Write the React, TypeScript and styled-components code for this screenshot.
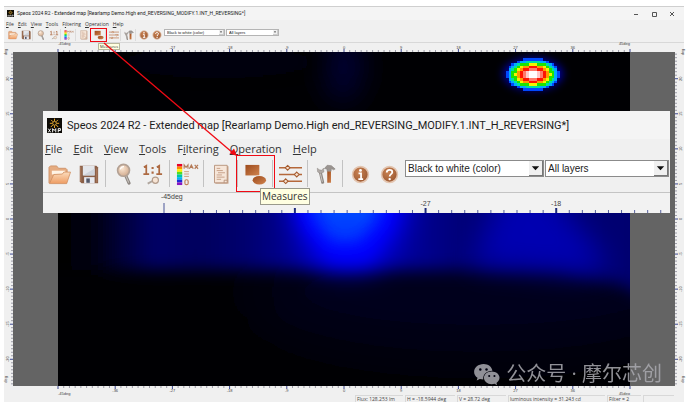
import React from "react";
import styled, { createGlobalStyle, css } from "styled-components";

const GlobalStyle = createGlobalStyle`
  *, *::before, *::after { box-sizing: border-box; }
  body { margin: 0; background: #fff; font-family: "Open Sans", "Noto Sans", sans-serif; color: #222; }
  svg { display: block; }
`;

/* ---------- window shell ---------- */

const Page = styled.div`
  height: 100vh;
  padding: 6px 6px 7px 4px;
`;
const Window = styled.main`
  position: relative;
  display: flex;
  flex-direction: column;
  height: 100%;
  background: #f0f0f0;
  border-top: 1px solid #cfcfcf;
`;

/* Both the window and the enlarged callout share these parts; $big picks the enlarged set. */
type Sized = { $big?: boolean };

const TitleBar = styled.header<Sized>`
  display: flex;
  align-items: center;
  gap: ${(p) => (p.$big ? 5 : 3)}px;
  height: ${(p) => (p.$big ? 28 : 13)}px;
  padding: 0 ${(p) => (p.$big ? 4 : 3)}px;
  background: #f4f4f4;
`;
const Title = styled.h1<Sized>`
  flex: 1;
  margin: 0;
  font-family: Roboto, "Open Sans", sans-serif;
  font-size: ${(p) => (p.$big ? 11 : 5)}px;
  line-height: 1;
  font-weight: 400;
  white-space: nowrap;
  color: #1c1c1c;
`;
const Controls = styled.div`
  display: flex;
`;
const ControlButton = styled.button`
  display: grid;
  place-items: center;
  width: 18px;
  height: 12px;
  padding: 0;
  border: 0;
  background: none;
`;
const MenuBar = styled.nav<Sized>`
  display: flex;
  align-items: center;
  gap: ${(p) => (p.$big ? 11 : 4)}px;
  height: ${(p) => (p.$big ? 18 : 8)}px;
  padding: 0 2px;
`;
const MenuButton = styled.button<Sized>`
  padding: 0;
  border: 0;
  background: none;
  font: inherit;
  font-size: ${(p) => (p.$big ? 11 : 5)}px;
  line-height: 1;
  color: #333;
`;
const Toolbar = styled.div<Sized>`
  display: flex;
  align-items: flex-start;
  height: ${(p) => (p.$big ? 36 : 15)}px;
  padding: ${(p) => (p.$big ? "3px 0 0 2px" : "1px 0 0 2px")};
  border-bottom: 1px solid ${(p) => (p.$big ? "#c4c4c4" : "#d8d8d8")};
`;
const ToolButton = styled.button<Sized & { $narrow?: boolean; $marked?: boolean }>`
  position: relative;
  display: grid;
  place-items: center;
  flex: none;
  width: ${(p) => (p.$big ? (p.$narrow ? 28 : 29) : 13)}px;
  height: ${(p) => (p.$big ? 28 : 12)}px;
  padding: 0;
  border: 0;
  background: none;
  font-family: inherit;
  ${(p) =>
    p.$marked &&
    css`
      z-index: 1;
      &::after {
        content: "";
        position: absolute;
        inset: ${p.$big ? "-5px -5px -4px -5px" : "-1px -2px"};
        border: 1px solid #f00a14;
      }
    `}
`;
const Divider = styled.span<Sized>`
  flex: none;
  width: 1px;
  height: ${(p) => (p.$big ? 27 : 12)}px;
  margin: 0 ${(p) => (p.$big ? "3px 0 2px" : "1px 0 0")};
  background: ${(p) => (p.$big ? "#c2c2c2" : "#dcdcdc")};
`;
const Tip = styled.span<Sized>`
  position: absolute;
  z-index: 2;
  top: ${(p) => (p.$big ? 28 : 14)}px;
  left: ${(p) => (p.$big ? 19 : 6)}px;
  padding: ${(p) => (p.$big ? "2px 1px" : "0 1px")};
  border: 1px solid ${(p) => (p.$big ? "#9a9a8c" : "#b8b89c")};
  background: #ffffe1;
  font-size: ${(p) => (p.$big ? 10 : 4)}px;
  line-height: ${(p) => (p.$big ? 11 : 5)}px;
  color: #333;
`;

const SelectBox = styled.label<Sized & { $wide?: boolean }>`
  position: relative;
  flex: none;
  width: ${(p) => (p.$big ? (p.$wide ? 139 : 124) : p.$wide ? 61 : 53)}px;
  height: ${(p) => (p.$big ? 17 : 7)}px;
  margin-left: 1px;
  & > svg {
    position: absolute;
    right: 1px;
    top: 1px;
    width: ${(p) => (p.$big ? 14 : 5)}px;
    height: calc(100% - 2px);
    background: #f0f0f0;
    border-right: 1px solid ${(p) => (p.$big ? "#777" : "#ccc")};
    border-bottom: 1px solid ${(p) => (p.$big ? "#777" : "#ccc")};
    pointer-events: none;
  }
`;
const SelectInput = styled.select<Sized>`
  appearance: none;
  display: block;
  width: 100%;
  height: 100%;
  padding: 0 2px;
  border: 1px solid ${(p) => (p.$big ? "#8b8b8b" : "#b4b4b4")};
  border-radius: 0;
  background: #fff;
  font-family: "Liberation Sans", Arial, sans-serif;
  font-size: ${(p) => (p.$big ? 10 : 4)}px;
  line-height: 1;
  color: #222;
`;

/* ---------- map area ---------- */

const Viewer = styled.section`
  flex: 1;
  min-height: 0;
  display: grid;
  grid-template-columns: 9px 45px minmax(0, 1fr) 45px 9px;
  grid-template-rows: 9px minmax(0, 1fr) 9px;
`;
const Margin = styled.div`
  background: #646464;
  grid-row: 2;
`;
const RulerSlot = styled.div<{ $col: number; $row: number }>`
  grid-column: ${(p) => p.$col};
  grid-row: ${(p) => p.$row};
  min-width: 0;
`;
const RulerSvg = styled.svg`
  width: 100%;
  height: 100%;
  overflow: visible;
  font-family: "Liberation Sans", Arial, sans-serif;
  font-size: 4px;
  fill: #444;
`;
const MapSlot = styled.div`
  grid-column: 3;
  grid-row: 2;
  background: #000;
  & > svg {
    width: 100%;
    height: 100%;
  }
`;

const StatusBar = styled.footer`
  display: grid;
  grid-template-columns: 1fr 50px 52px 51px 99px 36px 33px 8px;
  height: 7px;
  font-size: 5px;
  line-height: 6px;
  color: #444;
  white-space: nowrap;
`;
const StatusCell = styled.span`
  padding-left: 1px;
  margin-right: 2px;
  border-top: 1px solid #d8d8d8;
  border-left: 1px solid #d8d8d8;
`;

/* ---------- overlays ---------- */

const Callout = styled.section`
  position: absolute;
  top: 104px;
  left: 39px;
  right: 14px;
  background: #f0f0f0;
`;
const CalloutRuler = styled.div`
  height: 20px;
  background: #f2f2f2;
  & > svg {
    font-size: 7px;
  }
`;
const Arrow = styled.svg`
  position: absolute;
  z-index: 3;
  top: 35px;
  left: 99px;
  pointer-events: none;
`;
const Watermark = styled.div`
  position: absolute;
  right: 22px;
  bottom: 15px;
  display: flex;
  align-items: center;
  gap: 6px;
  font-family: "Open Sans", "Noto Sans CJK SC", sans-serif;
  font-size: 20px;
  line-height: 26px;
  color: #aaaab0;
  opacity: 0.85;
`;

/* ---------- icons, all on a 24-unit grid ---------- */

const Svg = ({ size, children }: { size: number; children: React.ReactNode }) => (
  <svg width={size} height={size} viewBox="0 0 24 24" fill="none" aria-hidden="true">
    {children}
  </svg>
);

const HiddenDefs = styled.svg`
  position: absolute;
`;

const SharedDefs = () => (
  <HiddenDefs width="0" height="0" aria-hidden="true">
    <defs>
      <linearGradient id="copper" x1="0" y1="0" x2="1" y2="1">
        <stop offset="0" stopColor="#9c4a1c" />
        <stop offset="1" stopColor="#d0834e" />
      </linearGradient>
      <linearGradient id="folderFront" x1="0" y1="0" x2="0" y2="1">
        <stop offset="0" stopColor="#fbdcbc" />
        <stop offset="1" stopColor="#ee9c63" />
      </linearGradient>
      <radialGradient id="glass" cx="0.4" cy="0.35" r="0.7">
        <stop offset="0" stopColor="#fbe6d2" />
        <stop offset="1" stopColor="#cfa88b" />
      </radialGradient>
      <radialGradient id="badge" cx="0.4" cy="0.35" r="0.7">
        <stop offset="0" stopColor="#c98252" />
        <stop offset="1" stopColor="#9a5730" />
      </radialGradient>
    </defs>
  </HiddenDefs>
);

const glyphs: Record<string, React.ReactNode> = {
  Open: (
    <>
      <path d="M1 21V4.500L2.500 3H9l2 2.500h7.500L20 7v4" fill="#e5ab80" stroke="#c98a5e" strokeWidth=".8" />
      <path d="M4 8h14v4H4z" fill="#fff3e4" />
      <path d="M1.500 21.500 6 12l9-.5 1.500-2h7L19.500 21.500z" fill="url(#folderFront)" stroke="#cf8a5a" strokeWidth=".8" />
    </>
  ),
  Save: (
    <>
      <path d="M2 2h19l2 2v18H4l-2-2z" fill="#8a5f47" />
      <path d="M5.500 2h13.500v11H5.500z" fill="#e4e6ea" />
      <path d="m5.500 13 13.500-8v8z" fill="#cfd3da" />
      <path d="M3.200 3v17M21.500 5v16" stroke="#b98566" />
      <path d="M7 15h12v7H7z" fill="#e8eaf0" />
      <path d="M9.500 16.500h4v5h-4z" fill="#555a6a" />
    </>
  ),
  Zoom: (
    <>
      <path d="m14 14 3.500 8" stroke="#8d8681" strokeWidth="3.400" strokeLinecap="round" />
      <path d="m14 14 3 7" stroke="#c4bfba" strokeWidth="1.200" strokeLinecap="round" />
      <circle cx="11.500" cy="8" r="6.500" fill="url(#glass)" stroke="#b3a194" strokeWidth="1.800" />
      <path d="M8 7a4 4 0 0 1 4-3" stroke="#fff" strokeWidth="1.200" />
    </>
  ),
  "Actual size": (
    <>
      <path d="M3 4.500 5.500 3v8M2.500 11.500h6M16.500 4.500 19 3v8M16 11.500h6" stroke="#ad6a42" strokeWidth="1.800" />
      <path d="M11 5.200h2.200M11 10h2.200" stroke="#ad6a42" strokeWidth="2.200" />
      <path d="m12.500 18.500-5.500 3" stroke="#b0a69e" strokeWidth="2" />
      <circle cx="15" cy="18" r="3.200" fill="#f7e4d4" stroke="#b39c8b" strokeWidth="1.200" />
    </>
  ),
  "Color scale": (
    <>
      {["#e8002a", "#ff8a00", "#ffee00", "#54dc20", "#00c9a0", "#00b4f4", "#1a2bd8", "#8a16c0"].map((c, i) => (
        <path key={c} d={`M1 ${1 + i * 2.75}h5.500v2.750h-5.500z`} fill={c} />
      ))}
      <path d="M8.500 6V2l2 2.500 2-2.500v4M14 6l2-4 2 4M15 4.600h2M19.500 2 23 6M23 2l-3.500 4" stroke="#b57b58" strokeWidth="1.200" />
      <path d="M8.500 9h5M8.500 11.500h5M8.500 14h5" stroke="#cf9f80" strokeWidth="1" />
      <rect x="9.300" y="17.500" width="3.400" height="5" rx="1.500" stroke="#c08058" strokeWidth="1.200" />
    </>
  ),
  Report: (
    <>
      <path d="M5 2.500h15v20H5z" fill="#c9a58c" />
      <path d="M4 1.500h14.500v20H4z" fill="#f6e6d9" stroke="#b58f77" />
      <path d="M6.500 5h4M6.500 7.500h7M8 10h8M6.500 12.500h6M6.500 15h9M6.500 17.500h5" stroke="#c29a80" strokeWidth="1" />
      <path d="M15 21.500v-3h3.500" stroke="#b58f77" />
    </>
  ),
  Measures: (
    <>
      <path d="M1.500 2H16v11H1.500z" fill="url(#copper)" />
      <ellipse cx="16" cy="18" rx="7.500" ry="5" fill="#f0f0f0" />
      <ellipse cx="16" cy="18" rx="7" ry="4.400" fill="url(#copper)" />
    </>
  ),
  Settings: (
    <>
      <path d="M0 5h24M0 12h24M0 19h24" stroke="#b5683a" strokeWidth="1.500" />
      <path d="M9 2.500 11.500 5 9 7.500 6.500 5zM18.500 9.500 21 12l-2.500 2.500L16 12zM7 16.500 9.500 19 7 21.500 4.500 19z" fill="#f5dfcd" stroke="#a45a2d" strokeWidth="1.100" />
    </>
  ),
  Preferences: (
    <>
      <path d="M5 9 8 22" stroke="#8f8883" strokeWidth="3.600" strokeLinecap="round" />
      <path d="M5 10 7.500 21" stroke="#cbc7c3" strokeWidth="1.200" strokeLinecap="round" />
      <path d="M1.500 5 2 9.500l3.500 2 4-2L9 5 7 7.500 4 7z" fill="#b0aaa6" stroke="#8b8581" strokeWidth=".6" />
      <path d="M10 5.500 13.500 1.500l5 .5 4.500 4-2 1-2.500-1.500L18 9h-4.500L13 6z" fill="#9a9490" stroke="#7c7672" strokeWidth=".6" />
      <path d="M13.500 9H18v13.500h-4.500z" fill="url(#copper)" />
    </>
  ),
  About: (
    <>
      <circle cx="12" cy="12" r="10" fill="url(#badge)" stroke="#e3c5b0" strokeWidth="2" />
      <circle cx="12" cy="6.800" r="1.800" fill="#fff" />
      <path d="M9.500 10.500h3.200v7M9.300 17.700h6" stroke="#fff" strokeWidth="2.200" />
    </>
  ),
  "Help topics": (
    <>
      <circle cx="12" cy="12" r="10" fill="url(#badge)" stroke="#e3c5b0" strokeWidth="2" />
      <path d="M8.500 9.500c0-4.500 7-4.500 7-.5 0 2.500-3.300 2.500-3.300 5.500" stroke="#fff" strokeWidth="2.300" />
      <circle cx="12.200" cy="17.800" r="1.500" fill="#fff" />
    </>
  ),
};

const AppLogo = ({ size }: { size: number }) => (
  <Svg size={size}>
    <path d="M0 0h24v24H0z" fill="#0d0b06" />
    <path
      d="M12 1v4M12 12v4M4.500 8.500h4M15.500 8.500h4M6.500 3l3 3M14.500 11l3.500 3.500M17.500 3l-3 3M9.500 11 6 14.500"
      stroke="#e0a126"
      strokeWidth="1.600"
    />
    <circle cx="12" cy="8.500" r="3" stroke="#e9b23a" strokeWidth="1.400" />
    <path d="m2 17 4 6M6 17l-4 6M9 23v-6l2.500 3 2.500-3v6M18 23v-6h3.500v3H18" stroke="#fff" strokeWidth="1.500" />
  </Svg>
);

/* ---------- rulers ---------- */

type RulerProps = {
  side: "top" | "bottom" | "left" | "right";
  start: number;
  step: number;
  labels: string[];
};

/* start and step are percentages of the ruler's length; ten minor ticks fill each step. */
const Ruler = ({ side, start, step, labels }: RulerProps) => {
  const horizontal = side === "top" || side === "bottom";
  const edge = side === "top" || side === "left" ? 9 : 0;
  const dir = edge === 9 ? -1 : 1;
  const ticks: React.ReactNode[] = [];
  const first = Math.ceil(-start / (step / 10));
  for (let i = first; start + (i * step) / 10 <= 100.01; i++) {
    const at = `${start + (i * step) / 10}%`;
    const major = i % 10 === 0;
    const end = edge + dir * (major ? 3 : 2);
    const pos = horizontal ? { x1: at, x2: at, y1: edge, y2: end } : { y1: at, y2: at, x1: edge, x2: end };
    ticks.push(<line key={i} {...pos} stroke={major ? "#3c4890" : "#9c9ca8"} />);
  }
  return (
    <RulerSvg>
      {ticks}
      {labels.map((text, i) => {
        const at = `${start + i * step}%`;
        const unit = text.endsWith("deg");
        return horizontal ? (
          <text
            key={i}
            x={at}
            y={side === "top" ? (unit ? 2 : 6) : unit ? 9 : 6}
            textAnchor={!unit ? "middle" : i === 0 ? "start" : "end"}
          >
            {text}
          </text>
        ) : (
          <svg key={i} x={side === "left" ? 5 : 7} y={at} overflow="visible">
            <text transform="rotate(-90)" textAnchor="middle">
              {text}
            </text>
          </svg>
        );
      })}
      {!horizontal &&
        ["0%", "98%"].map((at) => (
          <svg key={at} x={side === "left" ? 3 : 9} y={at} overflow="visible">
            <text transform="rotate(-90)" textAnchor="middle">
              deg
            </text>
          </svg>
        ))}
    </RulerSvg>
  );
};

const bottomLabels = ["-45deg", "-36", "-27", "-18", "-9", "0", "9", "18", "27", "36", "45deg"];
const topLabels = bottomLabels.map((text) => (text === "-36" ? "" : text));
const vLabels = ["20", "15", "10", "5", "0", "-5", "-10", "-15", "-20"];

const EnlargedRuler = () => (
  <RulerSvg>
    <line x1="19.300%" x2="19.300%" y1="10" y2="20" stroke="#4a5698" />
    <text x="18.800%" y="6">
      -45deg
    </text>
    {Array.from({ length: 37 }, (_, i) => {
      const major = i % 10 === 8;
      const at = `${23.5 + i * 2.084}%`;
      return (
        <line
          key={i}
          x1={at}
          x2={at}
          y1={major ? 15 : 17}
          y2={20}
          stroke={major ? "#1d2a7a" : "#56609c"}
          strokeWidth={major ? 2 : 1}
        />
      );
    })}
    {["-27", "-18"].map((t, i) => (
      <text key={t} x={`${61 + i * 20.84}%`} y="13" textAnchor="middle">
        {t}
      </text>
    ))}
  </RulerSvg>
);

/* ---------- intensity map ---------- */

const spotColor = (r: number) => {
  const stops: [number, string][] = [
    [0.2, "#ffffff"],
    [0.3, "#ffc8c8"],
    [0.39, "#ff7a6a"],
    [0.52, "#ff1400"],
    [0.59, "#ff9a00"],
    [0.67, "#f4f400"],
    [0.79, "#1ee400"],
    [0.87, "#00e0a0"],
    [0.95, "#00aaff"],
    [1.03, "#0048ff"],
  ];
  const hit = stops.find(([limit]) => r < limit);
  return hit ? hit[1] : null;
};

const IntensityMap = () => {
  const cells: React.ReactNode[] = [];
  for (let row = -7; row <= 7; row++) {
    for (let col = -11; col <= 11; col++) {
      const x = col * 2.86;
      const y = row * 2.5;
      const color = spotColor(Math.hypot(x / 26, y / 15.5));
      if (color) {
        cells.push(
          <rect key={`${row}:${col}`} x={473.5 + x} y={21 + y} width="2.900" height="2.540" fill={color} shapeRendering="crispEdges" />
        );
      }
    }
  }
  return (
    <svg viewBox="0 0 572 334" preserveAspectRatio="none" role="img" aria-label="Luminous intensity map">
      <defs>
        {[4, 8, 14, 28].map((n) => (
          <filter key={n} id={`soft${n}`} x="-100%" y="-100%" width="300%" height="300%">
            <feGaussianBlur stdDeviation={n} />
          </filter>
        ))}
        <linearGradient id="band" x1="0" y1="0" x2="1" y2="0">
          <stop offset="0" stopColor="#000000" />
          <stop offset="0.08" stopColor="#00000a" />
          <stop offset="0.18" stopColor="#000066" />
          <stop offset="0.25" stopColor="#00005c" />
          <stop offset="0.33" stopColor="#000070" />
          <stop offset="0.42" stopColor="#0000a0" />
          <stop offset="0.56" stopColor="#0000a0" />
          <stop offset="0.66" stopColor="#000078" />
          <stop offset="1" stopColor="#00006e" />
        </linearGradient>
      </defs>
      <rect width="572" height="334" fill="#000003" />
      <ellipse cx="420" cy="240" rx="230" ry="60" fill="#00001e" filter="url(#soft28)" />
      <ellipse cx="285" cy="15" rx="20" ry="36" fill="#000030" filter="url(#soft14)" />
      <ellipse cx="160" cy="10" rx="110" ry="16" fill="#00000e" filter="url(#soft14)" />
      <path d="M-20 110H620V260L560 232 500 218H-20z" fill="url(#band)" filter="url(#soft8)" />
      <path d="M446 130h40l66 84-30 8-108-10z" fill="#0000c0" opacity=".8" filter="url(#soft14)" />
      <path d="M224 110h132l-14 70-28 36h-50l-22-36z" fill="#0000ff" filter="url(#soft14)" />
      <path d="M236 110h108l-12 62-22 34h-36l-28-34z" fill="#0000ff" filter="url(#soft8)" />
      <path d="M246 120h88l-14 50-20 20h-26l-18-22z" fill="#003cff" filter="url(#soft8)" />
      <path d="M262 120h56l-10 48h-34z" fill="#0050ff" filter="url(#soft4)" opacity=".6" />
      <ellipse cx="475" cy="22" rx="30" ry="16" fill="#0000a8" filter="url(#soft4)" />
      {cells}
    </svg>
  );
};

/* ---------- bars ---------- */

const menus: [string, number][] = [
  ["File", 0],
  ["Edit", 0],
  ["View", 0],
  ["Tools", 0],
  ["Filtering", 1],
  ["Operation", 0],
  ["Help", 0],
];

const toolGroups = [
  ["Open", "Save"],
  ["Zoom", "Actual size"],
  ["Color scale"],
  ["Report"],
  ["Measures"],
  ["Settings"],
  ["Preferences"],
  ["About", "Help topics"],
];
const glyphSizes: Record<string, number> = {
  Save: 21,
  Zoom: 22,
  Report: 21,
  Preferences: 20,
  About: 19,
  "Help topics": 19,
};

const Choice = ({ big, wide, name, value }: { big?: boolean; wide?: boolean; name: string; value: string }) => (
  <SelectBox $big={big} $wide={wide}>
    <SelectInput $big={big} aria-label={name} defaultValue={value}>
      <option>{value}</option>
    </SelectInput>
    <svg viewBox="0 0 14 15" aria-hidden="true">
      <path d="M3 5.500h8L7 10z" fill="#111" />
    </svg>
  </SelectBox>
);

const Bars = ({ big, controls }: { big?: boolean; controls?: React.ReactNode }) => (
  <>
    <TitleBar $big={big}>
      <AppLogo size={big ? 15 : 7} />
      <Title $big={big} as={big ? "h2" : "h1"}>
        Speos 2024 R2 - Extended map [Rearlamp Demo.High end_REVERSING_MODIFY.1.INT_H_REVERSING*]
      </Title>
      {controls}
    </TitleBar>
    <MenuBar $big={big}>
      {menus.map(([label, key]) => (
        <MenuButton key={label} $big={big}>
          {label.slice(0, key)}
          <u>{label[key]}</u>
          {label.slice(key + 1)}
        </MenuButton>
      ))}
    </MenuBar>
    <Toolbar $big={big}>
      {toolGroups.map((group, i) => (
        <React.Fragment key={group[0]}>
          {i > 0 && <Divider $big={big} />}
          {group.map((name) => (
            <ToolButton
              key={name}
              $big={big}
              $narrow={name === "Color scale" || name === "Report"}
              $marked={name === "Measures"}
              aria-label={name}
            >
              <Svg size={big ? glyphSizes[name] ?? 23 : 10}>{glyphs[name]}</Svg>
              {name === "Measures" && <Tip $big={big}>Measures</Tip>}
            </ToolButton>
          ))}
        </React.Fragment>
      ))}
      <Choice big={big} wide name="Color palette" value="Black to white (color)" />
      <Choice big={big} name="Layer" value="All layers" />
    </Toolbar>
  </>
);

const WindowControls = () => (
  <Controls>
    {[
      ["Minimize", "M1 3.500h4"],
      ["Maximize", "M1.500 1.500h4v4h-4z"],
      ["Close", "m1 1 4 4M5 1 1 5"],
    ].map(([name, d]) => (
      <ControlButton key={name} aria-label={name}>
        <svg width="6" height="6" viewBox="0 0 6 6" fill="none" stroke="#555">
          <path d={d} />
        </svg>
      </ControlButton>
    ))}
  </Controls>
);

const ChatLogo = () => (
  <svg width="26" height="21" viewBox="0 0 27 22" aria-hidden="true">
    <path d="M10 0C4.300 0 0 3.800 0 8.300c0 2.600 1.400 4.700 3.600 6.200l-.9 2.900 3.300-1.700c1.200.3 2.300.5 3.600.5C9 11 13 7 19.200 7 18.500 2.900 14.700 0 10 0z" fill="currentColor" />
    <path d="M18.500 7.800c-4.700 0-8.200 3-8.200 6.700s3.500 6.700 8.200 6.700c1 0 2-.2 2.900-.4l2.700 1.400-.7-2.400c2-1.300 3.200-3.100 3.200-5.300 0-3.700-3.600-6.700-8.100-6.700z" fill="currentColor" />
    <g fill="#000010">
      <circle cx="6.500" cy="5.700" r="1.300" />
      <circle cx="13" cy="5.700" r="1.300" />
      <circle cx="15.800" cy="12.500" r="1.100" />
      <circle cx="21.300" cy="12.500" r="1.100" />
    </g>
  </svg>
);

export default function App() {
  return (
    <Page>
      <GlobalStyle />
      <SharedDefs />
      <Window>
        <Bars controls={<WindowControls />} />
        <Viewer>
          <RulerSlot $col={3} $row={1}>
            <Ruler side="top" start={0} step={10} labels={topLabels} />
          </RulerSlot>
          <RulerSlot $col={1} $row={2}>
            <Ruler side="left" start={8} step={10.5} labels={vLabels} />
          </RulerSlot>
          <Margin />
          <MapSlot>
            <IntensityMap />
          </MapSlot>
          <Margin />
          <RulerSlot $col={5} $row={2}>
            <Ruler side="right" start={8} step={10.5} labels={vLabels} />
          </RulerSlot>
          <RulerSlot $col={3} $row={3}>
            <Ruler side="bottom" start={0} step={10} labels={bottomLabels} />
          </RulerSlot>
        </Viewer>
        <StatusBar>
          <span />
          <StatusCell>Flux: 128.253 lm</StatusCell>
          <StatusCell>H = -18.5944 deg</StatusCell>
          <StatusCell>V = 28.72 deg</StatusCell>
          <StatusCell>luminous intensity = 31.243 cd</StatusCell>
          <StatusCell>Filter = 2</StatusCell>
          <StatusCell />
        </StatusBar>
        <Callout aria-label="Enlarged toolbar">
          <Bars big />
          <CalloutRuler>
            <EnlargedRuler />
          </CalloutRuler>
        </Callout>
        <Arrow width="136" height="116" viewBox="0 0 136 116" aria-hidden="true">
          <path d="M1 1 130 111" stroke="#f00a14" strokeWidth="1.300" />
          <path d="m134 114-7.500-2.500 4.500-5z" fill="#f00a14" />
        </Arrow>
        <Watermark>
          <ChatLogo />
          <span>公众号 · 摩尔芯创</span>
        </Watermark>
      </Window>
    </Page>
  );
}
